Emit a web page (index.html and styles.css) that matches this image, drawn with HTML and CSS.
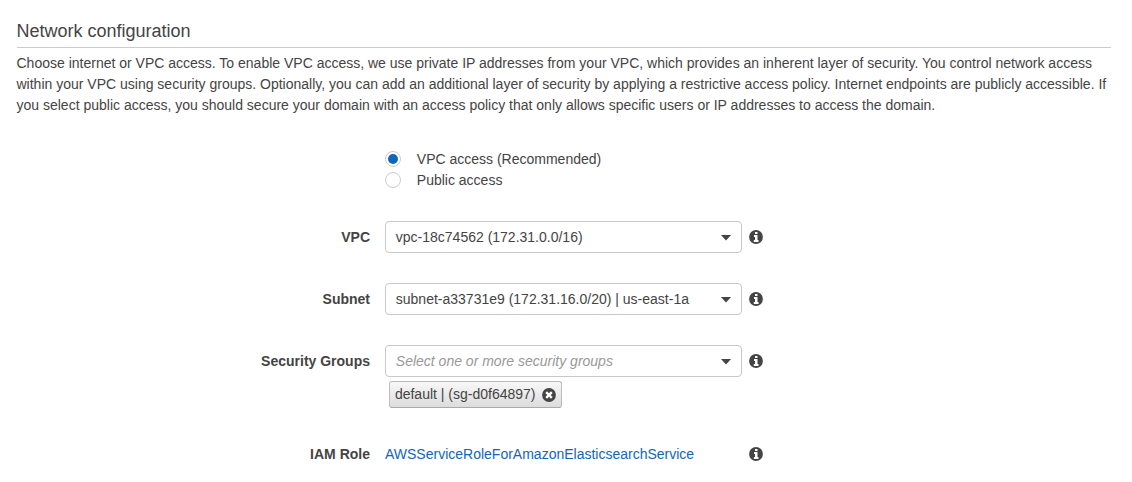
FILE: index.html
```html
<!DOCTYPE html>
<html lang="en">
<head>
<meta charset="utf-8">
<title>Network configuration</title>
<link rel="stylesheet" href="styles.css">
</head>
<body>
<svg class="symbols" aria-hidden="true">
  <symbol id="info" viewBox="0 0 14 14"><circle cx="7" cy="7" r="6.9" fill="#444"/><path d="M6 2h2.5v2H6zM5 5h3.5v5h1v2H4.8v-2H6V7H5z" fill="#fff"/></symbol>
  <symbol id="remove" viewBox="0 0 14 14"><circle cx="7" cy="7" r="6.9" fill="#444"/><path d="M4.2 4.2l5.6 5.6M9.8 4.2L4.2 9.8" stroke="#fff" stroke-width="2.4"/></symbol>
</svg>
<main class="page">
  <h1 class="title">Network configuration</h1>
  <p class="intro">Choose internet or VPC access. To enable VPC access, we use private IP addresses from your VPC, which provides an inherent layer of security. You control network access<br>within your VPC using security groups. Optionally, you can add an additional layer of security by applying a restrictive access policy. Internet endpoints are publicly accessible. If<br>you select public access, you should secure your domain with an access policy that only allows specific users or IP addresses to access the domain.</p>
  <div class="radios">
    <div class="radio"><span class="dot dot-on"></span>VPC access (Recommended)</div>
    <div class="radio"><span class="dot"></span>Public access</div>
  </div>
  <div class="row">
    <span class="label">VPC</span>
    <div class="select"><span>vpc-18c74562 (172.31.0.0/16)</span><i class="caret"></i></div>
    <svg class="info"><use href="#info"/></svg>
  </div>
  <div class="row">
    <span class="label">Subnet</span>
    <div class="select"><span>subnet-a33731e9 (172.31.16.0/20) | us-east-1a</span><i class="caret"></i></div>
    <svg class="info"><use href="#info"/></svg>
  </div>
  <div class="row row-groups">
    <span class="label">Security Groups</span>
    <div class="select"><span class="placeholder">Select one or more security groups</span><i class="caret"></i></div>
    <svg class="info"><use href="#info"/></svg>
  </div>
  <div class="tag"><span>default | (sg-d0f64897)</span><svg class="remove"><use href="#remove"/></svg></div>
  <div class="row">
    <span class="label">IAM Role</span>
    <a class="link">AWSServiceRoleForAmazonElasticsearchService</a>
    <svg class="info"><use href="#info"/></svg>
  </div>
</main>
</body>
</html>
```
FILE: styles.css
```css
* { box-sizing: border-box; }
body { margin: 0; background: #fff; color: #444; font: 14px/21px "Liberation Sans", Arial, sans-serif; }
.symbols { display: none; }
.page { width: 1132px; height: 482px; padding: 19px 21px 0 16.5px; overflow: hidden; }
.title { height: 29px; margin: 0; border-bottom: 1px solid #ccc; font-size: 18px; font-weight: 400; line-height: 24px; }
.intro { margin: 5px 0 0; white-space: nowrap; }
.radios { margin: 33px 0 30px 368.3px; }
.radio { display: flex; align-items: flex-start; gap: 16px; height: 21px; }
.dot { display: flex; flex: none; align-items: center; justify-content: center; width: 16px; height: 16px; margin-top: 2px; border: 1px solid #ccc; border-radius: 50%; }
.dot-on::after { content: ""; flex: none; width: 10.6px; height: 10.6px; border-radius: 50%; background: #1166bb; }
.row { display: grid; grid-template-columns: 353.5px 357px 14px; column-gap: 15px; align-items: center; height: 32px; margin-bottom: 30px; }
.info { width: 14px; height: 14px; margin-left: -8px; }
.label { font-weight: 700; text-align: right; }
.select { display: flex; align-items: center; justify-content: space-between; height: 32px; padding: 0 9.5px 0 9.8px; border: 1px solid #c8c8c8; border-radius: 4px; }
.caret { width: 11px; height: 6px; margin-top: 1px; background: #444; clip-path: polygon(0 0, 100% 0, 50% 100%); }
.placeholder { color: #999; font-style: italic; }
.row-groups { margin-bottom: 4px; }
.tag { display: flex; align-items: center; justify-content: space-between; width: 173px; height: 27px; margin: 0 0 30px 372.5px; padding: 0 5px 0 4.9px; border: 1px solid #bbb; border-bottom-color: #aaa; border-radius: 3px; background: linear-gradient(#f8f8f8, #dcdcdc); }
.remove { width: 14px; height: 14px; }
.link { color: #1166bb; }
```
